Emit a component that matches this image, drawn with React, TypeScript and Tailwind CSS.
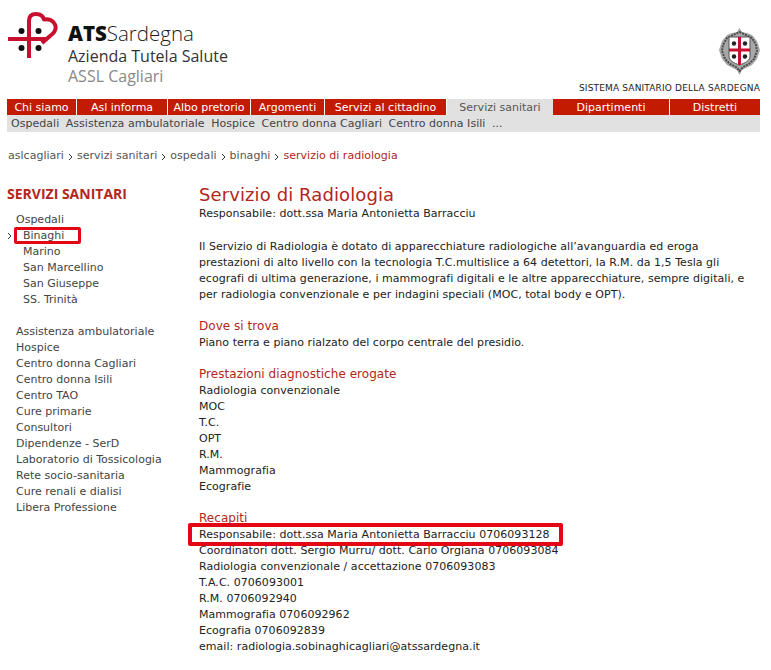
const tabs = [
  { t: "Chi siamo", w: "w-[70px]" },
  { t: "Asl informa", w: "w-[91px]" },
  { t: "Albo pretorio", w: "w-[83px]" },
  { t: "Argomenti", w: "w-[74px]" },
  { t: "Servizi al cittadino", w: "w-[122px]" },
];
const sub = ["Ospedali", "Assistenza ambulatoriale", "Hospice", "Centro donna Cagliari", "Centro donna Isili", "..."];
const crumbs = ["aslcagliari", "servizi sanitari", "ospedali", "binaghi"];
const side2 = ["Assistenza ambulatoriale", "Hospice", "Centro donna Cagliari", "Centro donna Isili", "Centro TAO", "Cure primarie", "Consultori", "Dipendenze - SerD", "Laboratorio di Tossicologia", "Rete socio-sanitaria", "Cure renali e dialisi", "Libera Professione"];
const ospedali = ["Marino", "San Marcellino", "San Giuseppe", "SS. Trinità"];
const prest = ["Radiologia convenzionale", "MOC", "T.C.", "OPT", "R.M.", "Mammografia", "Ecografie"];
const rec = ["Coordinatori dott. Sergio Murru/ dott. Carlo Orgiana 0706093084", "Radiologia convenzionale / accettazione 0706093083", "T.A.C. 0706093001", "R.M. 0706092940", "Mammografia 0706092962", "Ecografia 0706092839", "email: radiologia.sobinaghicagliari@atssardegna.it"];

function Logo() {
  return (
    <svg width="52" height="52" viewBox="7 12 52 52" className="shrink-0">
      <path d="M8 39H47" stroke="#c8102e" strokeWidth="4" fill="none" />
      <path d="M29 58V21C29 16 32 14 36 14C40 14 43 16 44 19.5C48 18.5 53 20 55 24.5C57 29 54 33 50 36L42 43" stroke="#c8102e" strokeWidth="4" fill="none" strokeLinejoin="round" />
      <circle cx="21.5" cy="31" r="3" fill="#111" />
      <circle cx="38.5" cy="31" r="3" fill="#111" />
      <circle cx="21.5" cy="48" r="3" fill="#111" />
      <circle cx="38.5" cy="48" r="3" fill="#111" />
    </svg>
  );
}

function Crest() {
  return (
    <svg width="41" height="47" viewBox="0 0 41 47" className="block">
      <path d="M20.5 0L23 4L28 5L33 7L38 13L41 22L38 31L33 37L27 40L23 42L20.5 47L18 42L14 40L8 37L3 31L0 22L3 13L8 7L13 5L18 4Z" fill="#a8a8a8" />
      <path d="M20.5 4L27 7L33 10L37 17L38 23L35 31L30 36L24 39L20.5 43L17 39L11 36L6 31L3 23L4 17L8 10L14 7Z" fill="none" stroke="#4a4a4a" strokeWidth="2" strokeDasharray="2 1" />
      <path d="M10 9H31V28C31 33 26 35 20.5 37C15 35 10 33 10 28Z" fill="#fff" stroke="#555" />
      <path d="M20.5 9V37M10 22H31" stroke="#c8102e" strokeWidth="3" />
      <circle cx="15" cy="15.5" r="2.2" fill="#222" />
      <circle cx="26" cy="15.5" r="2.2" fill="#222" />
      <circle cx="15" cy="28.5" r="2.2" fill="#222" />
      <circle cx="26" cy="28.5" r="2.2" fill="#222" />
    </svg>
  );
}

function Chevron() {
  return (
    <svg width="3" height="6" viewBox="0 0 3 6" className="block">
      <path d="M0 0L3 3L0 6" fill="none" stroke="#333" strokeWidth="1" />
    </svg>
  );
}

export default function App() {
  return (
    <div className="relative w-[771px] h-[670px] overflow-hidden bg-white font-['DejaVu_Sans','Verdana',sans-serif] text-[11px] leading-4 text-[#222]">
      <header className="flex justify-between pl-[7px] pr-[11px] pt-[12px] h-[99px]">
        <div className="flex">
          <Logo />
          <div className="pl-[9px] pt-[9px] font-['Open_Sans',sans-serif] text-[#333]">
            <div className="text-[20.5px] leading-[25px] font-light text-[#222]"><b className="font-extrabold text-[#111]">ATS</b>Sardegna</div>
            <div className="text-[#333] text-[16px] leading-5">Azienda Tutela Salute</div>
            <div className="text-[#888] text-[16px] leading-5">ASSL Cagliari</div>
          </div>
        </div>
        <div className="flex flex-col items-end pt-[16px]">
          <Crest />
          <div className="mt-[7px] text-[9px] leading-3 tracking-[0.16px] text-[#222]">SISTEMA SANITARIO DELLA SARDEGNA</div>
        </div>
      </header>

      <nav className="ml-[7px] w-[753px]">
        <div className="flex h-4 bg-[#c31a02] text-white">
          {tabs.map((x) => (
            <div key={x.t} className={`${x.w} pt-px border-r border-white text-center whitespace-nowrap`}>{x.t}</div>
          ))}
          <div className="w-[106px] pt-px bg-[#e1e1e1] text-[#555] text-center">Servizi sanitari</div>
          <div className="w-[117px] pt-px border-r border-white text-center">Dipartimenti</div>
          <div className="flex-1 pt-px text-center">Distretti</div>
        </div>
        <div className="flex h-[17px] pt-px gap-[6.5px] bg-[#e1e1e1] pl-1 text-[#444] tracking-[0.03px]">
          {sub.map((x) => <span key={x} className="whitespace-nowrap">{x}</span>)}
        </div>
      </nav>

      <div className="flex items-center pl-[8px] pt-[16px] text-[#555] tracking-[0.02px]">
        {crumbs.map((c) => (
          <span key={c} className="flex items-center">
            {c}
            <span className="px-[5px] pt-[2px]"><Chevron /></span>
          </span>
        ))}
        <span className="text-[#b3261a]">servizio di radiologia</span>
      </div>

      <div className="flex pt-[20px]">
        <aside className="w-[199px] shrink-0 pl-[7px] text-[#444]">
          <h2 className="font-['Open_Sans',sans-serif] font-bold text-[14px] leading-[20px] text-[#b3261a]">SERVIZI SANITARI</h2>
          <div className="pl-[9px] pt-[8px]">
            <div>Ospedali</div>
            <div className="relative pl-[7px]">
              <span className="absolute left-[-8px] top-[5px]"><Chevron /></span>
              Binaghi
            </div>
            {ospedali.map((x) => <div key={x} className="pl-[7px]">{x}</div>)}
            <div className="h-4" />
            {side2.map((x) => <div key={x}>{x}</div>)}
          </div>
        </aside>
        <main className="min-w-0 flex-1 pr-[20px] text-[#222] tracking-[0.04px]">
          <h1 className="text-[18px] leading-[22px] text-[#b3261a] tracking-[0.1px]">Servizio di Radiologia</h1>
          <p>Responsabile: dott.ssa Maria Antonietta Barracciu</p>
          <p className="mt-[17px]">Il Servizio di Radiologia è dotato di apparecchiature radiologiche all’avanguardia ed eroga prestazioni di alto livello con la tecnologia T.C.multislice a 64 detettori, la R.M. da 1,5 Tesla gli ecografi di ultima generazione, i mammografi digitali e le altre apparecchiature, sempre digitali, e per radiologia convenzionale e per indagini speciali (MOC, total body e OPT).</p>
          <h3 className="mt-[15px] text-[12px] leading-[17px] text-[#b3261a]">Dove si trova</h3>
          <p>Piano terra e piano rialzato del corpo centrale del presidio.</p>
          <h3 className="mt-[15px] text-[12px] leading-[17px] text-[#b3261a]">Prestazioni diagnostiche erogate</h3>
          {prest.map((x) => <p key={x}>{x}</p>)}
          <h3 className="mt-[15px] text-[12px] leading-[17px] text-[#b3261a]">Recapiti</h3>
          <p>Responsabile: dott.ssa Maria Antonietta Barracciu 0706093128</p>
          {rec.map((x) => <p key={x}>{x}</p>)}
        </main>
      </div>

      <div className="absolute left-[14px] top-[227px] h-[17px] w-[67px] rounded-[2px] border-[3px] border-[#e30613]" />
      <div className="absolute left-[188px] top-[523px] h-[23px] w-[375px] rounded-[2px] border-[4px] border-[#e30613]" />
    </div>
  );
}
